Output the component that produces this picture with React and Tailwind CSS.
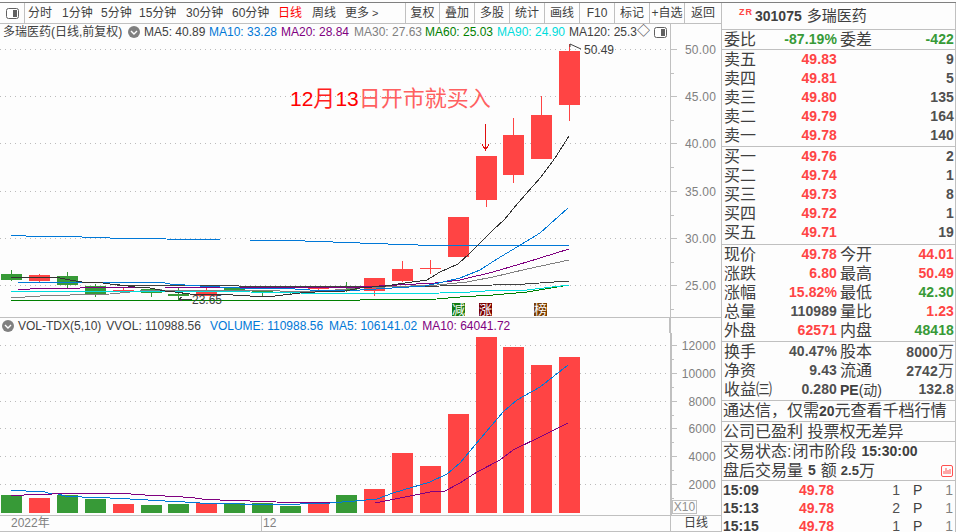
const R = '#ff4444';
const G = '#379a37';
const candles = [
  [1, 274, 280, 270, 281, G], [29, 275, 281, 274, 283, R], [57, 276, 285, 272, 288, G],
  [85, 286, 294, 284, 297, G], [113, 290, 292, 288, 292, R], [141, 289, 293, 289, 297, G],
  [168, 294, 296, 288, 300, G], [196, 291, 296, 287, 296, R], [224, 288, 292, 288, 292, G],
  [252, 291, 293, 290, 296, G], [280, 292, 293, 291, 295, G], [308, 288, 289, 288, 292, R],
  [336, 289, 291, 282, 292, G], [364, 278, 291, 278, 296, R], [392, 269, 281, 261, 282, R],
  [420, 268, 269, 260, 274, R], [448, 217, 257, 217, 257, R], [476, 156, 200, 156, 207, R],
  [503, 135, 175, 118, 183, R], [531, 115, 159, 96, 159, R], [559, 51, 105, 44, 121, R],
];
const volBars = [
  [1, 495, G], [29, 498, R], [57, 495, G], [85, 499, G], [113, 504, R], [141, 505, G], [168, 504, G],
  [196, 503, R], [224, 503, G], [252, 503, G], [280, 506, G], [308, 504, R], [336, 495, G],
  [364, 489, R], [392, 453, R], [420, 466, R], [448, 414, R], [476, 337, R], [503, 347, R], [531, 365, R], [559, 357, R],
];
const priceLines = [
  ['#0078d7', '11,235 25,235 26,236 80,236 82,237 110,238 165,238 166,239 220,240 250,240 305,241 360,243 388,244 418,245 569,245'],
  ['#404040', '115,285 360,287 440,286 493,285 525,284 569,281'],
  ['#008000', '11,300 360,300 437,299 460,297 493,295 527,292 569,285'],
  ['#808080', '11,298 25,297 40,296 70,295 110,294 140,291 160,290 280,291 310,292 360,288 437,285 467,282 493,277 527,269 569,260'],
  ['#00dcdc', '11,291 150,291 250,292 300,293 360,294 440,293 470,292 500,290 527,290 569,285'],
  ['#800080', '18,290 30,289 50,288 80,288 140,287 165,287 360,287 435,283 460,280 493,272 527,262 569,249'],
  ['#0078d7', '18,283 30,282 160,282 170,284 185,285 200,286 240,288 280,288 310,290 360,290 425,286 443,282 460,278 480,270 497,259 517,247 540,233 568,208'],
  ['#333333', '11,277 35,277 60,278 70,280 82,282 95,282 110,284 120,285 135,287 150,288 165,291 175,292 190,294 215,294 250,296 275,296 300,293 330,291 345,291 360,288 385,286 405,283 427,280 440,272 458,264 470,253 493,230 504,220 518,203 541,177 555,158 569,136'],
];
const volLines = [
  ['#0078d7', '11,490 25,490 26,491 42,491 48,493 58,494 65,496 80,496 82,497 110,498 130,499 165,501 185,502 200,503 220,503 240,504 300,504 330,503 355,501 377,499 393,493 430,482 447,474 460,463 475,445 503,412 517,400 540,387 568,365'],
  ['#800080', '11,495 24,495 25,494 52,494 60,493 130,493 131,494 145,495 165,496 183,497 195,498 202,499 220,500 250,501 276,502 330,503 375,503 400,498 430,492 445,491 460,483 477,472 500,460 513,450 540,437 568,423'],
];

function Chevron({ className }) {
  return (
    <svg width="12" height="12" viewBox="0 0 12 12" className={className}>
      <circle cx="6" cy="6" r="6" fill="#808080" />
      <path d="M3 5l3 3 3-3" fill="none" stroke="#fff" strokeWidth="1.4" />
    </svg>
  );
}
function PanelIcon() {
  return (
    <svg width="13" height="11" viewBox="0 0 13 11">
      <rect x="0.5" y="0.5" width="12" height="10" rx="2" fill="#fff" stroke="#606060" />
      <rect x="7" y="2" width="4" height="7" fill="#606060" />
    </svg>
  );
}

function Tool({ w, sep, children }) {
  return (
    <div className={`flex h-full shrink-0 items-center justify-center whitespace-nowrap text-[#404040] ${sep ? 'border-r border-[#c0c0c0]' : ''}`} style={{ width: w }}>
      {children}
    </div>
  );
}

function Toolbar() {
  const tabs = [['分时', 34], ['1分钟', 39], ['5分钟', 38], ['15分钟', 47], ['30分钟', 46], ['60分钟', 46], ['日线', 34], ['周线', 33]];
  const btns = [['复权', 34], ['叠加', 35], ['多股', 35], ['统计', 35], ['画线', 35], ['F10', 35], ['标记', 35], ['+自选', 35], ['返回', 36]];
  return (
    <div className="flex h-[21px] items-center border-b border-[#c0c0c0] text-[12px]">
      <div className="flex h-full w-[25px] shrink-0 items-center justify-center border-r border-[#c0c0c0]"><PanelIcon /></div>
      <div className="w-[3px] shrink-0" />
      {tabs.map(([t, w]) => <span key={t} className={`shrink-0 whitespace-nowrap ${t === '日线' ? 'text-[#ff0000]' : 'text-[#404040]'}`} style={{ width: w }}>{t}</span>)}
      <div className="flex h-full w-[60px] shrink-0 items-center whitespace-nowrap text-[#404040]">更多<span className="ml-[3px] text-[11px]">&gt;</span></div>
      <div className="h-full w-px shrink-0 bg-[#c0c0c0]" />
      {btns.map(([t, w]) => <Tool key={t} w={w} sep={t !== '返回'}>{t}</Tool>)}
    </div>
  );
}

function InfoRow() {
  const items = [['MA5: 40.89', 'text-[#404040]', 65], ['MA10: 33.28', 'text-[#0078d7]', 72], ['MA20: 28.84', 'text-[#800080]', 73], ['MA30: 27.63', 'text-[#808080]', 71], ['MA60: 25.03', 'text-[#008000]', 72], ['MA90: 24.90', 'text-[#00dcdc]', 72], ['MA120: 25.3', 'text-[#404040]', 68]];
  return (
    <div className="flex h-[16px] w-[671px] items-center border-r border-[#c0c0c0] pl-[3px] text-[12px] text-[#404040]">
      <span className="w-[120px] shrink-0 whitespace-nowrap">多瑞医药(日线,前复权)</span>
      <Chevron className="ml-[5px] shrink-0" />
      <div className="ml-[4px] flex whitespace-nowrap">
        {items.map(([t, c, w]) => <span key={t} className={`shrink-0 ${c}`} style={{ width: w }}>{t}</span>)}
        <span className="w-[14px] shrink-0 text-[13px] leading-[16px]">◇</span>
      </div>
      <div className="ml-auto mr-[3px]"><PanelIcon /></div>
    </div>
  );
}

function PriceChart() {
  const ys = [[49.5, '50.00'], [96, '45.00'], [143, '40.00'], [191, '35.00'], [238, '30.00'], [285.5, '25.00']];
  return (
    <svg width="721" height="277" viewBox="0 40 721 277" className="block">
      {ys.map(([y]) => <line key={y} x1="0" x2="670" y1={y} y2={y} stroke="#bbbbbb" strokeDasharray="1 4" shapeRendering="crispEdges" />)}
      <line x1="670.5" x2="670.5" y1="40" y2="317" stroke="#c0c0c0" />
      {ys.map(([y, t]) => (
        <g key={t}>
          <line x1="671" x2="677" y1={y} y2={y} stroke="#c0c0c0" shapeRendering="crispEdges" />
          <line x1="671" x2="674" y1={y + 24} y2={y + 24} stroke="#c0c0c0" shapeRendering="crispEdges" />
          <text x="685" y={y + 4.5} fill="#808080" className="text-[12px] tracking-[0.2px]">{t}</text>
        </g>
      ))}
      {candles.map(([x, t, b, wt, wb, c]) => (
        <g key={x} shapeRendering="crispEdges">
          <line x1={x + 10.5} x2={x + 10.5} y1={wt} y2={wb} stroke={c} />
          <rect x={x} y={t} width="21" height={b - t} fill={c} />
        </g>
      ))}
      {priceLines.map(([c, p], i) => <polyline key={i} points={p} fill="none" stroke={c} strokeWidth="1" shapeRendering="crispEdges" />)}
      <text x="290" y="106" fill="#ff0000" className="text-[21px]">12<tspan className="text-[22px]" fill="#ff2020">月</tspan>13<tspan className="text-[22px]" fill="#ff6060">日开市就买入</tspan></text>
      <g stroke="#e01010" fill="none" shapeRendering="crispEdges">
        <line x1="485.5" x2="485.5" y1="124" y2="149" />
        <path d="M482 144l3.5 6 3.5-6" />
      </g>
      <path d="M570 47v-3l11 5" fill="none" stroke="#404040" />
      <text x="584" y="54" fill="#404040" className="text-[12px]">50.49</text>
      <path d="M192 299h-13m3-2l-3 2 3 2" fill="none" stroke="#404040" shapeRendering="crispEdges" />
      <text x="192" y="304" fill="#404040" className="text-[12px]">23.65</text>
      {[[452, '减', '#107a10'], [479, '涨', '#7a0000'], [534, '榜', '#7a3d00']].map(([x, t, c]) => (
        <g key={t}>
          <rect x={x} y="303" width="13" height="13" fill={c} />
          <text x={x} y="314" fill="#fff" className="text-[13px]">{t}</text>
        </g>
      ))}
    </svg>
  );
}

function VolInfo() {
  return (
    <div className="flex h-[15px] w-[671px] items-center whitespace-nowrap border-r-2 border-[#c0c0c0] pl-[2px] text-[12px] text-[#404040]">
      <Chevron className="shrink-0" />
      <span className="ml-[4px]">VOL-TDX(5,10)</span>
      <span className="ml-[5px]">VVOL: 110988.56</span>
      <span className="ml-[9px] text-[#0078d7]">VOLUME: 110988.56</span>
      <span className="ml-[6px] text-[#0078d7]">MA5: 106141.02</span>
      <span className="ml-[5px] text-[#800080]">MA10: 64041.72</span>
    </div>
  );
}

function VolChart() {
  const ys = [[345, '12000'], [373, '10000'], [401, '8000'], [428, '6000'], [456, '4000'], [484, '2000']];
  return (
    <div className="relative h-[182px] w-[721px]">
      <svg width="721" height="182" viewBox="0 333 721 182" className="block">
        {ys.map(([y]) => <line key={y} x1="0" x2="670" y1={y + 0.5} y2={y + 0.5} stroke="#bbbbbb" strokeDasharray="1 4" shapeRendering="crispEdges" />)}
        <rect x="670" y="333" width="2" height="182" fill="#c0c0c0" />
        {ys.map(([y, t]) => (
          <g key={t}>
            <line x1="672" x2="677" y1={y + 0.5} y2={y + 0.5} stroke="#c0c0c0" shapeRendering="crispEdges" />
            <line x1="672" x2="674" y1={y + 14.5} y2={y + 14.5} stroke="#c0c0c0" shapeRendering="crispEdges" />
            <text x="716" y={y + 5} textAnchor="end" fill="#808080" className="text-[12px] tracking-[0.2px]">{t}</text>
          </g>
        ))}
        {volBars.map(([x, t, c]) => <rect key={x} x={x} y={t} width="21" height={513 - t} fill={c} shapeRendering="crispEdges" />)}
        {volLines.map(([c, p], i) => <polyline key={i} points={p} fill="none" stroke={c} shapeRendering="crispEdges" />)}
      </svg>
      <div className="absolute left-[672px] top-[167px] flex h-[14px] w-[25px] items-center justify-center border border-[#c0c0c0] text-[12px] text-[#909090]">X10</div>
    </div>
  );
}

function BottomRow() {
  return (
    <div className="flex h-[16px] border-b border-[#c0c0c0] text-[12px] leading-[15px]">
      <div className="w-[262px] border-r border-[#c0c0c0] pl-[11px] text-[#808080]">2022年</div>
      <div className="w-[409px] border-r border-[#c0c0c0] pl-px text-[#808080]">12</div>
      <div className="flex-1 pl-[13px] text-[#404040]">日线</div>
    </div>
  );
}

const Sep = () => <div className="h-px bg-[#c0c0c0]" />;

function Num({ c, w, children }) {
  return <span className={`text-right text-[14px] font-bold tracking-[0.1px] ${c}`} style={{ width: w }}>{children}</span>;
}

const red = 'text-[#ff4444]', green = 'text-[#379a37]', dark = 'text-[#505050]';

function Quad({ a, b, bc, c, d, dc }) {
  return (
    <div className="flex h-[19px] items-center whitespace-nowrap">
      <span className="w-[34px] pl-[2px] text-[16px] text-[#404040]">{a}</span>
      <Num c={bc} w={81}>{b}</Num>
      <span className="ml-[3px] w-[36px] text-[16px] text-[#404040]">{c}</span>
      <Num c={dc} w={78}>{d}</Num>
    </div>
  );
}

function Level({ a, p, v }) {
  return (
    <div className="flex h-[19px] items-center">
      <span className="w-[34px] pl-[2px] text-[16px] text-[#404040]">{a}</span>
      <Num c={red} w={81}>{p}</Num>
      <Num c={dark} w={117}>{v}</Num>
    </div>
  );
}

function Trade({ t, a }) {
  return (
    <div className="flex h-[18px] items-center whitespace-nowrap text-[14px] font-bold">
      <span className="w-[38px] pl-[1px] text-[#404040]">{t}</span>
      <span className="w-[74px] text-right text-[#ff4444]">49.78</span>
      <span className="w-[66px] text-right font-normal text-[#505050]">{a}</span>
      <span className="ml-[13px] w-[10px] font-normal text-[#404040]">P</span>
      <span className="w-[30px] text-right font-normal text-[#808080]">1</span>
    </div>
  );
}

function RightPanel() {
  return (
    <div className="h-full w-[235px] overflow-hidden border-x border-[#c0c0c0]">
      <div className="flex h-[26px] items-center pl-[17px]">
        <span className="mb-[7px] text-[9px] font-bold tracking-[1px] text-[#ff4444]">ZR</span>
        <span className="ml-[2px] text-[14px] font-bold text-[#404040]">301075</span>
        <span className="ml-[5px] text-[15px] text-[#404040]">多瑞医药</span>
      </div>
      <Sep />
      <Quad a="委比" b="-87.19%" bc={green} c="委差" d="-422" dc={green} />
      <Sep />
      <div className="h-[96px]">
        <Level a="卖五" p="49.83" v="9" />
        <Level a="卖四" p="49.81" v="5" />
        <Level a="卖三" p="49.80" v="135" />
        <Level a="卖二" p="49.79" v="164" />
        <Level a="卖一" p="49.78" v="140" />
      </div>
      <Sep />
      <div className="h-[97px]">
        <Level a="买一" p="49.76" v="2" />
        <Level a="买二" p="49.74" v="1" />
        <Level a="买三" p="49.73" v="8" />
        <Level a="买四" p="49.72" v="1" />
        <Level a="买五" p="49.71" v="19" />
      </div>
      <Sep />
      <div className="h-[96px]">
        <Quad a="现价" b="49.78" bc={red} c="今开" d="44.01" dc={red} />
        <Quad a="涨跌" b="6.80" bc={red} c="最高" d="50.49" dc={red} />
        <Quad a="涨幅" b="15.82%" bc={red} c="最低" d="42.30" dc={green} />
        <Quad a="总量" b="110989" bc={dark} c="量比" d="1.23" dc={red} />
        <Quad a="外盘" b="62571" bc={red} c="内盘" d="48418" dc={green} />
      </div>
      <Sep />
      <div className="h-[58px]">
        <Quad a="换手" b="40.47%" bc={dark} c="股本" d={<>8000<span className="text-[16px] font-normal">万</span></>} dc={dark} />
        <Quad a="净资" b="9.43" bc={dark} c="流通" d={<>2742<span className="text-[16px] font-normal">万</span></>} dc={dark} />
        <Quad a="收益㈢" b="0.280" bc={dark} c={<><b className="text-[14px]">PE</b><span className="text-[14px]">(动)</span></>} d="132.8" dc={dark} />
      </div>
      <Sep />
      <div className="flex h-[20px] items-center whitespace-nowrap pl-px text-[16px] text-[#404040]">通达信，仅需<b className="text-[14px]">20</b>元查看千档行情</div>
      <Sep />
      <div className="flex h-[19px] items-center whitespace-nowrap pl-px text-[16px] text-[#404040]">公司已盈利 投票权无差异</div>
      <Sep />
      <div className="relative h-[38px] whitespace-nowrap pl-px text-[16px] text-[#404040]">
        <div className="flex h-[19px] items-center">交易状态:<span className="ml-[1px]">闭市阶段</span><b className="ml-[5px] text-[14px]">15:30:00</b></div>
        <div className="flex h-[19px] items-center">盘后交易量<b className="mx-[5px] text-[14px]">5</b>额<b className="ml-[4px] text-[13px]">2.5</b>万</div>
        <svg width="12" height="12" viewBox="0 0 12 12" className="absolute right-[2px] top-[23px]">
          <rect x="0.5" y="0.5" width="11" height="11" rx="1.5" fill="none" stroke="#ff5050" />
          <path d="M3 9V6M5 9V3M7 9V5M9 9V4" stroke="#ff5050" />
        </svg>
      </div>
      <Sep />
      <Trade t="15:09" a="1" />
      <Trade t="15:13" a="2" />
      <Trade t="15:15" a="1" />
    </div>
  );
}

export default function App() {
  return (
    <div className="h-[532px] w-[956px] overflow-hidden bg-[#fdfdfd] font-['Liberation_Sans','Noto_Sans_CJK_SC',sans-serif]">
      <div className="h-[2px]" />
      <div className="h-px bg-[#808080]" />
      <div className="flex h-[529px]">
        <div className="w-[721px]">
          <Toolbar />
          <InfoRow />
          <PriceChart />
          <div className="h-px bg-[#c0c0c0]" />
          <VolInfo />
          <VolChart />
          <div className="h-px bg-[#c0c0c0]" />
          <BottomRow />
        </div>
        <RightPanel />
      </div>
    </div>
  );
}
